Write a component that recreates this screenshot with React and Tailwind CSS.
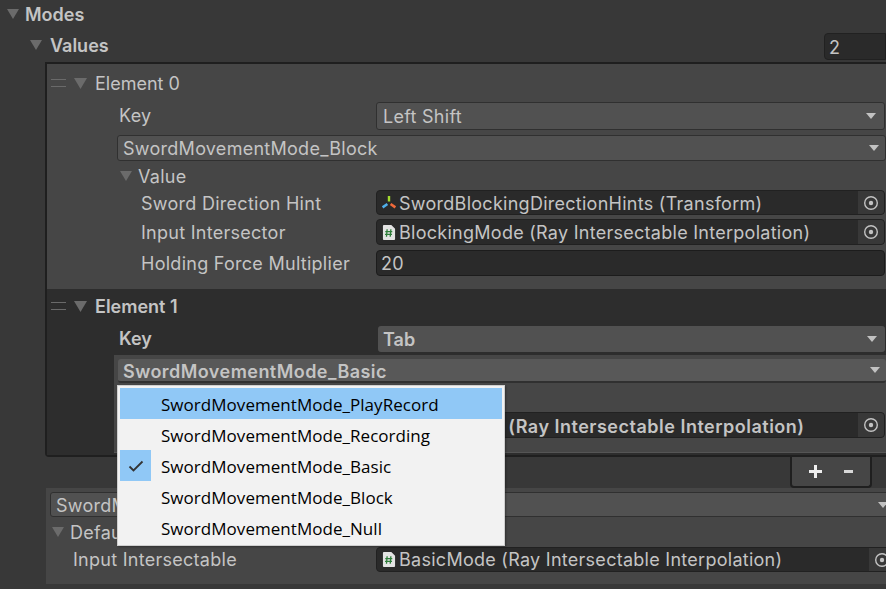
const T = ({ cls = "", pt = "pt-[2px]", children }) => <span className={"whitespace-nowrap " + pt + " " + cls}>{children}</span>;

const Tri = ({ cls = "", w = 12, h = 10, fill = "#6b6b6b" }) => (
  <svg width={w} height={h} viewBox="0 0 12 10" preserveAspectRatio="none" className={"shrink-0 " + cls}>
    <polygon points="0,0 12,0 6,10" fill={fill} />
  </svg>
);

const Handle = () => (
  <div className="w-[15px] h-[8px] ml-[4px] flex flex-col justify-between shrink-0">
    <div className="h-px bg-[#6a6a6a]" />
    <div className="h-px bg-[#6a6a6a]" />
  </div>
);

const Arrow = ({ cls = "" }) => <Tri w={10} h={6} fill="#c2c2c2" cls={cls} />;

const Picker = ({ cls = "" }) => (
  <div className={"w-[26px] self-stretch bg-[#383838] rounded-r-[3px] flex items-center justify-center shrink-0 " + cls}>
    <svg width="16" height="16" viewBox="0 0 16 16">
      <circle cx="8" cy="8" r="6.3" fill="none" stroke="#c2c2c2" strokeWidth="1.4" />
      <circle cx="8" cy="8" r="2.2" fill="#c2c2c2" />
    </svg>
  </div>
);

const TransformIcon = () => (
  <svg width="16" height="16" viewBox="0 0 16 16" className="shrink-0">
    <path d="M8 1V6.5" stroke="#a4dc2e" strokeWidth="2.4" />
    <path d="M6.4 9L1.6 12.4" stroke="#4fb0ea" strokeWidth="2.6" />
    <path d="M9.6 9L14.4 12.4" stroke="#f0693a" strokeWidth="2.6" />
  </svg>
);

const ScriptIcon = () => (
  <svg width="14" height="17" viewBox="0 0 15 17" className="shrink-0 ml-[1px] mr-[1px]">
    <path d="M1 1.5a1 1 0 0 1 1-1h8l4 4v11a1 1 0 0 1-1 1H2a1 1 0 0 1-1-1z" fill="#e3e3e3" />
    <path d="M5.5 5L4.8 13M9.5 5L8.8 13M3.5 7.5H11M3.2 10.5H10.7" stroke="#2e7d3a" strokeWidth="1.4" fill="none" />
  </svg>
);

const ObjectField = ({ icon, text, cls = "", textCls = "", pt }) => (
  <div className={"flex items-center bg-[#2a2a2a] border border-[#212121] rounded-[4px] overflow-hidden " + cls}>
    <div className="w-[4px] shrink-0" />
    {icon}
    <T pt={pt} cls={"ml-[2px] flex-1 " + textCls}>{text}</T>
    <Picker />
  </div>
);

const Select = ({ text, cls = "", textCls = "", pt, arrowCls = "mr-[8px]" }) => (
  <div className={"flex items-center justify-between rounded-[3px] " + cls}>
    <T pt={pt} cls={textCls}>{text}</T>
    <Arrow cls={arrowCls} />
  </div>
);

const menu = [
  "SwordMovementMode_PlayRecord",
  "SwordMovementMode_Recording",
  "SwordMovementMode_Basic",
  "SwordMovementMode_Block",
  "SwordMovementMode_Null",
];

export default function App() {
  return (
    <div className="relative w-[886px] h-[589px] overflow-hidden bg-[#383838] text-[#c4c4c4] text-[18px] leading-[24px] tracking-[0.27px] font-['Inter',sans-serif]">
      {/* Modes */}
      <div className="h-[28px] flex items-center pl-[7px]">
        <Tri />
        <T cls="ml-[6px] font-semibold tracking-normal">Modes</T>
      </div>
      {/* Values */}
      <div className="h-[34px] flex items-center pl-[30px]">
        <Tri />
        <T cls="ml-[8px] font-semibold tracking-normal">Values</T>
        <div className="ml-auto w-[62px] h-[27px] mt-[3px] bg-[#2a2a2a] border border-[#212121] rounded-l-[4px] pl-[4px] flex items-center">
          <T>2</T>
        </div>
      </div>

      {/* List */}
      <div className="ml-[45px] border-t-2 border-l-2 border-b-2 border-[#1f1f1f] rounded-bl-[4px] bg-[#464646]">
        {/* Element 0 */}
        <div className="h-[225px] pr-[1px]">
          <div className="h-[38px] flex items-center">
            <Handle />
            <Tri w={13} h={11} cls="ml-[8px]" />
            <T cls="ml-[8px] tracking-normal">Element 0</T>
          </div>
          <div className="h-[28px] flex items-center pl-[72px]">
            <T pt="pt-0" cls="w-[257px]">Key</T>
            <Select text="Left Shift" cls="flex-1 h-[28px] bg-[#515151] border border-[#303030] pl-[6px]" />
          </div>
          <Select text="SwordMovementMode_Block" cls="ml-[70px] mr-[-1px] mt-[5px] h-[26px] bg-[#515151] border border-[#303030] pl-[5px]" arrowCls="mr-[6px]" />
          <div className="h-[29px] flex items-center pl-[73px]">
            <Tri />
            <T cls="ml-[6px]">Value</T>
          </div>
          <div className="h-[25px] flex items-center pl-[94px]">
            <T cls="w-[235px]">Sword Direction Hint</T>
            <ObjectField cls="flex-1 h-[25px]" icon={<TransformIcon />} text="SwordBlockingDirectionHints (Transform)" />
          </div>
          <div className="h-[26px] mt-[4px] flex items-center pl-[94px]">
            <T cls="w-[235px]">Input Intersector</T>
            <ObjectField cls="flex-1 h-[26px]" icon={<ScriptIcon />} text="BlockingMode (Ray Intersectable Interpolation)" />
          </div>
          <div className="h-[26px] mt-[5px] flex items-center pl-[94px]">
            <T cls="w-[235px]">Holding Force Multiplier</T>
            <div className="flex-1 h-[26px] bg-[#2a2a2a] border border-[#1c1c1c] rounded-[4px] pl-[4px] flex items-center">
              <T>20</T>
            </div>
          </div>
        </div>

        {/* Element 1 */}
        <div className="h-[166px] bg-[#2d2d2d] font-semibold">
          <div className="h-[34px] flex items-center">
            <Handle />
            <Tri w={13} h={11} cls="ml-[8px]" />
            <T cls="ml-[8px] tracking-normal">Element 1</T>
          </div>
          <div className="h-[26px] mt-[3px] flex items-center pl-[72px] pr-[1px]">
            <T pt="pt-0" cls="w-[259px] tracking-normal">Key</T>
            <Select text="Tab" cls="flex-1 h-[26px] bg-[#515151] pl-[5px]" textCls="tracking-normal" />
          </div>
          <div className="ml-[67px] mt-[3px] h-[98px] pt-[4px] bg-[#464646] border-b border-[#555555]">
            <Select text="SwordMovementMode_Basic" pt="pt-[4px]" cls="ml-[4px] h-[24px] bg-[#585858] border-b-2 border-[#303030] pl-[5px]" textCls="tracking-[0.45px]" arrowCls="mr-[6px]" />
            <div className="h-[29px] flex items-center pl-[6px]">
              <Tri />
              <T cls="ml-[6px]">Value</T>
            </div>
            <div className="h-[26px] flex items-center pl-[27px] pr-[1px]">
              <T pt="pt-[4px]" cls="w-[238px]">Input Intersector</T>
              <ObjectField cls="flex-1 h-[26px]" pt="pt-[4px]" textCls="tracking-[0.5px]" icon={<ScriptIcon />} text="BasicMode (Ray Intersectable Interpolation)" />
            </div>
          </div>
        </div>
      </div>

      {/* Footer add/remove */}
      <div className="h-[31px] flex justify-end pr-[14px]">
        <div className="w-[82px] h-[31px] bg-[#464646] border-x-2 border-b-2 border-[#1f1f1f] rounded-b-[4px] flex items-center justify-center gap-[22px]">
          <span className="relative w-[13px] h-[13px]">
            <span className="absolute left-0 top-[5px] w-[13px] h-[3px] bg-[#eeeeee]" />
            <span className="absolute left-[5px] top-0 w-[3px] h-[13px] bg-[#eeeeee]" />
          </span>
          <span className="w-[9px] h-[3px] bg-[#d8d8d8]" />
        </div>
      </div>

      {/* Default block */}
      <div className="ml-[46px] h-[96px] bg-[#464646] pt-[4px]">
        <Select text="SwordMovementMode_Basic" cls="ml-[4px] mr-[-3px] h-[25px] bg-[#515151] border border-[#303030] pl-[5px]" arrowCls="mr-[0px]" />
        <div className="h-[30px] flex items-center pl-[6px]">
          <Tri />
          <T cls="ml-[6px]">Default Value</T>
        </div>
        <div className="h-[25px] flex items-center pl-[27px]">
          <T pt="pt-0" cls="w-[303px]">Input Intersectable</T>
          <ObjectField cls="flex-1 mr-[-10px] h-[25px]" pt="pt-0" icon={<ScriptIcon />} text="BasicMode (Ray Intersectable Interpolation)" />
        </div>
      </div>

      {/* Popup menu */}
      <div className="absolute left-[117px] top-[385px] w-[388px] h-[161px] bg-[#f2f2f2] border-[1px] border-[#cfcfcf] p-[2px] font-['Open_Sans',sans-serif] text-[17px] tracking-[0.04px] text-black shadow-[1px_1px_2px_rgba(0,0,0,0.3)]">
        {menu.map((m, i) => (
          <div key={m} className={"relative flex items-center h-[31px] pl-[41px] whitespace-nowrap " + (i === 0 ? "bg-[#90c8f6]" : "")}>
            {i === 2 && (
              <div className="absolute left-0 top-0 w-[31px] h-[31px] bg-[#90c8f6] flex items-center justify-center">
                <svg width="16" height="12" viewBox="0 0 16 12">
                  <path d="M1.5 6.5L5.5 10.5L14.5 1.5" fill="none" stroke="#333333" strokeWidth="1.8" />
                </svg>
              </div>
            )}
            <span className="pt-[2px]">{m}</span>
          </div>
        ))}
      </div>
    </div>
  );
}
